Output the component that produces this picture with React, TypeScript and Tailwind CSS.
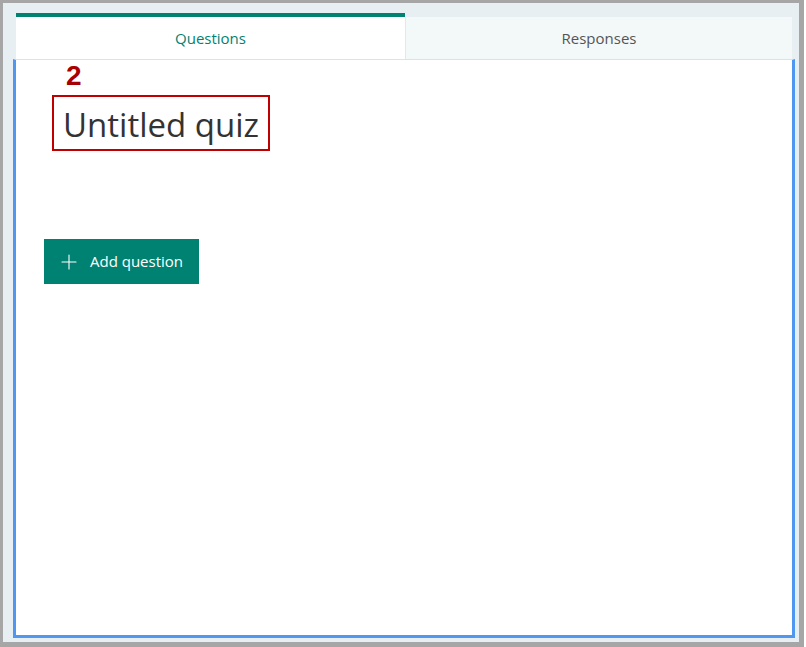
import { Plus } from 'lucide-react'

const font = { fontFamily: '"Open Sans", "Noto Sans", sans-serif' }

function Tabs() {
  return (
    <div className="mx-[3px] flex h-[46px] shrink-0">
      <div className="flex w-[389px] items-center justify-center border-t-4 border-[#008272] bg-white text-[15px] text-[#008272]">
        Questions
      </div>
      <div className="mt-[4px] flex flex-1 items-center justify-center border-l border-[#e1e9eb] bg-[#f3f8f9] text-[15px] text-[#555555]">
        Responses
      </div>
    </div>
  )
}

export default function App() {
  return (
    <div className="h-[647px] w-[806px] bg-white" style={font}>
      <div className="flex h-[647px] w-[804px] flex-col border-b-[5px] border-l-[3px] border-r-[5px] border-t-[3px] border-[#a6a6a6] bg-[#e7eff2] pb-[4px] pl-[10px] pr-[4px] pt-[10px]">
        <Tabs />
        <main className="flex flex-1 flex-col items-start border-x-[3px] border-b-[3px] border-t border-x-[#4f97f0] border-b-[#4f97f0] border-t-[#d5e4f5] bg-white pl-[36px] pt-[2px]">
          <span
            className="ml-[14px] text-[28px] font-bold leading-[28px] text-[#a80000]"
            style={{ fontFamily: '"Liberation Sans", Arial, sans-serif' }}
          >
            2
          </span>
          <div className="mt-[5px] h-[56px] border-2 border-[#c00000] px-[9px] pt-[3px] text-[33px] leading-[49px] text-[#333333]">
            Untitled quiz
          </div>
          <button className="ml-[-8px] mt-[88px] flex h-[45px] w-[155px] items-center gap-[9px] bg-[#008272] pl-[13px] text-[15px] text-white">
            <Plus className="h-[24px] w-[24px]" strokeWidth={1.1} />
            Add question
          </button>
        </main>
      </div>
    </div>
  )
}
